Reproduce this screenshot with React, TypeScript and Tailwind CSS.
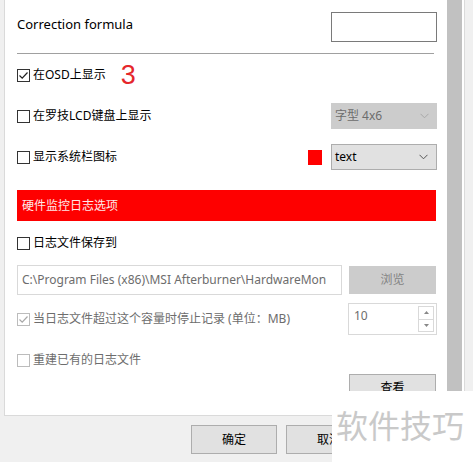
import React from 'react';

const Check: React.FC<{checked?: boolean; disabled?: boolean}> = ({checked, disabled}) => (
    <span
        className={`w-[13px] h-[13px] shrink-0 border flex items-center justify-center bg-white ${disabled ? 'border-[#bcbcbc]' : 'border-[#333333]'}`}>
        {checked && (
            <svg width="11" height="11" viewBox="0 0 11 11" fill="none">
                <path d="M1.5 5.5 L4.2 8.2 L9.5 2.5" stroke={disabled ? '#a8a8a8' : '#222222'} strokeWidth="1.2"/>
            </svg>
        )}
    </span>
);

const Chevron: React.FC<{color: string}> = ({color}) => (
    <svg width="9" height="6" viewBox="0 0 9 6" fill="none">
        <path d="M0.5 0.8 L4.5 4.8 L8.5 0.8" stroke={color} strokeWidth="1"/>
    </svg>
);

const App: React.FC = () => {
    return (
        <div className="w-[473px] h-[462px] bg-[#f0f0f0] relative overflow-hidden text-[12px] text-black font-['Noto_Sans','Noto_Sans_CJK_SC',sans-serif]">
            {/* scrolled settings panel */}
            <div className="ml-[4px] w-[461px] h-[416px] bg-white border-l border-r border-b border-[#dadada] flex">
                <div className="w-[442px] pl-[12px] pr-[10px] flex flex-col">
                    <div className="mt-[12px] h-[30px] flex items-start justify-between">
                        <span className="pt-[4px] text-[13px] leading-[16px]">Correction formula</span>
                        <div className="w-[106px] h-[30px] border border-[#7a7a7a] bg-white"/>
                    </div>

                    <div className="mt-[11px] mr-[3px] h-px bg-[#a0a0a0]"/>

                    <div className="mt-[11px] h-[20px] flex items-center gap-[3px]">
                        <Check checked/>
                        <span className="leading-none">在OSD上显示</span>
                        <span className="ml-[12px] text-[27px] leading-none text-[#e5262b] font-['Liberation_Sans',sans-serif]">3</span>
                    </div>

                    <div className="mt-[18px] h-[26px] flex items-center justify-between">
                        <div className="flex items-center gap-[3px]">
                            <Check/>
                            <span className="leading-none">在罗技LCD键盘上显示</span>
                        </div>
                        <div className="w-[106px] h-[26px] bg-[#cccccc] flex items-center justify-between pl-[4px] pr-[8px] text-[#6d6d6d]">
                            <span className="leading-none">字型 4x6</span>
                            <Chevron color="#a8a8a8"/>
                        </div>
                    </div>

                    <div className="mt-[15px] h-[26px] flex items-center justify-between">
                        <div className="flex items-center gap-[3px]">
                            <Check/>
                            <span className="leading-none">显示系统栏图标</span>
                        </div>
                        <div className="flex items-center gap-[9px]">
                            <div className="w-[14px] h-[15px] bg-[#ff0000]"/>
                            <div className="w-[106px] h-[26px] bg-[#e1e1e1] border border-[#adadad] flex items-center justify-between pl-[3px] pr-[8px]">
                                <span className="leading-none">text</span>
                                <Chevron color="#555555"/>
                            </div>
                        </div>
                    </div>

                    <div className="mt-[20px] mr-px h-[31px] bg-[#fe0000] flex items-center pl-[5px] text-[#ffe8e8]">
                        硬件监控日志选项
                    </div>

                    <div className="mt-[12px] h-[20px] flex items-center gap-[3px]">
                        <Check/>
                        <span className="leading-none">日志文件保存到</span>
                    </div>

                    <div className="mt-[12px] h-[30px] flex items-center justify-between">
                        <div className="w-[325px] h-[30px] border border-[#d9d9d9] flex items-center pl-[4px] text-[#6d6d6d] overflow-hidden whitespace-nowrap">
                            C:\Program Files (x86)\MSI Afterburner\HardwareMon
                        </div>
                        <div className="w-[87px] h-[28px] mr-px bg-[#cccccc] flex items-center justify-center text-[#838383]">
                            浏览
                        </div>
                    </div>

                    <div className="mt-[8px] h-[32px] flex items-center justify-between">
                        <div className="flex items-center gap-[3px] text-[#6d6d6d]">
                            <Check checked disabled/>
                            <span className="leading-none">当日志文件超过这个容量时停止记录 (单位：MB)</span>
                        </div>
                        <div className="w-[89px] h-[32px] border border-[#d9d9d9] flex">
                            <span className="flex-1 pl-[5px] pt-[4px] leading-[16px] text-[#6d6d6d]">10</span>
                            <div className="w-[16px] my-[2px] mr-[2px] border border-[#d9d9d9] flex flex-col">
                                <div className="flex-1 flex items-center justify-center border-b border-[#d9d9d9]">
                                    <svg width="5" height="3" viewBox="0 0 5 3"><path d="M0 3 L2.5 0 L5 3 Z" fill="#888888"/></svg>
                                </div>
                                <div className="flex-1 flex items-center justify-center">
                                    <svg width="5" height="3" viewBox="0 0 5 3"><path d="M0 0 L2.5 3 L5 0 Z" fill="#888888"/></svg>
                                </div>
                            </div>
                        </div>
                    </div>

                    <div className="mt-[15px] h-[20px] flex items-center gap-[3px] text-[#6d6d6d]">
                        <Check disabled/>
                        <span className="leading-none">重建已有的日志文件</span>
                    </div>

                    <div className="mt-[4px] self-end mr-px w-[87px] h-[28px] bg-[#e1e1e1] border border-[#adadad] flex items-center justify-center">
                        查看
                    </div>
                </div>

                {/* scrollbar */}
                <div className="w-[17px] flex">
                    <div className="w-[15px] h-[392px] bg-[#c1c1c1]"/>
                </div>
            </div>

            {/* dialog buttons */}
            <div className="mt-[9px] pl-[191px] flex gap-[9px]">
                <div className="w-[86px] h-[29px] bg-[#e1e1e1] border border-[#adadad] flex items-center justify-center">确定</div>
                <div className="w-[86px] h-[29px] bg-[#e1e1e1] border border-[#adadad] flex items-center justify-center">取消</div>
            </div>

            {/* watermark */}
            <div className="absolute left-[332px] top-[391px] right-0 bottom-0 bg-white flex items-center pl-[4px] pb-[6px]">
                <span className="text-[32px] leading-none text-[#c9c9c9] font-['Noto_Sans_CJK_SC',sans-serif]">软件技巧</span>
            </div>
        </div>
    );
};

export default App;
